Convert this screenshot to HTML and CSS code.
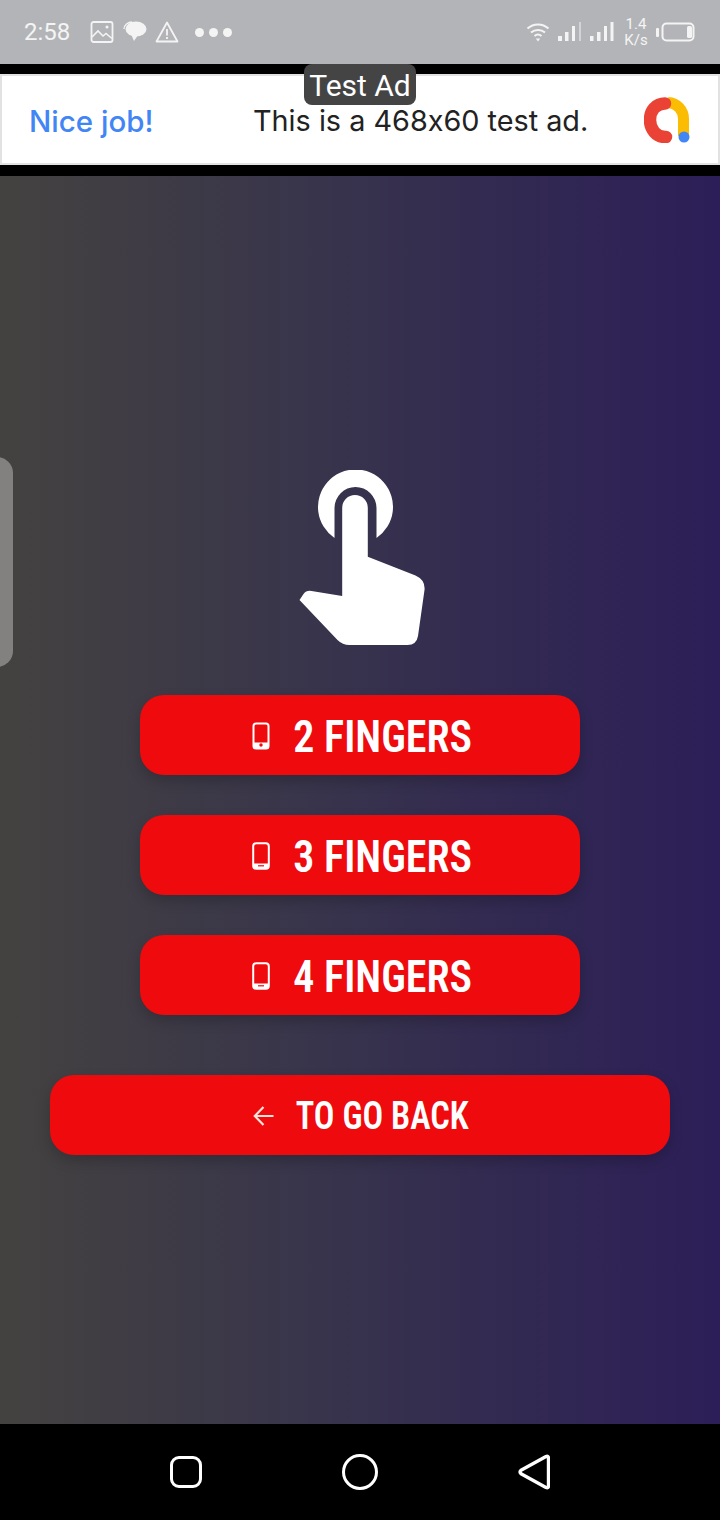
FILE: index.html
```html
<!DOCTYPE html>
<html lang="en">
<head>
<meta charset="UTF-8">
<title>Fingers</title>
<link rel="stylesheet" href="styles.css">
</head>
<body>
<div class="phone">
  <div class="statusBar">
    <span class="time">2:58</span>
    <svg class="statIcon imgIcon" width="24" height="24" viewBox="0 0 24 24"><rect x="1.500" y="2" width="21" height="20" rx="2" fill="none" stroke="#f4f4f4" stroke-width="1.800"/><path d="M2 17l6-6 5 5 3-2.500 6 5" fill="none" stroke="#f4f4f4" stroke-width="1.600"/><circle cx="17" cy="7" r="1.500" fill="#f4f4f4"/></svg>
    <svg class="statIcon chatIcon" width="24" height="24" viewBox="0 0 24 24"><ellipse cx="13" cy="9" rx="10.500" ry="7.500" fill="#f4f4f4"/><path d="M1 9c0-4 4-7 8-7" fill="none" stroke="#f4f4f4" stroke-width="1.400"/><path d="M8 14l3 7 4-6z" fill="#f4f4f4"/></svg>
    <svg class="statIcon warnIcon" width="24" height="24" viewBox="0 0 24 24"><path d="M12 2.500L1.500 21.500h21z" fill="none" stroke="#f4f4f4" stroke-width="1.800" stroke-linejoin="round"/><path d="M12 9v6.500M12 17v2" stroke="#f4f4f4" stroke-width="1.800"/></svg>
    <div class="dots"><i></i><i></i><i></i></div>
    <div class="statRight">
      <svg width="24" height="22" viewBox="0 0 24 22"><path d="M1.500 7.500c6-5.500 15-5.500 21 0M5 11.500c4-3.500 10-3.500 14 0M8.500 15c2-1.700 5-1.700 7 0" fill="none" stroke="#f4f4f4" stroke-width="2"/><path d="M9.800 17.500h4.400L12 20.500z" fill="#f4f4f4"/></svg>
      <svg width="24" height="22" viewBox="0 0 24 22"><g fill="#f4f4f4"><rect x="0" y="15" width="4" height="5"/><rect x="7" y="11" width="3.500" height="9"/><rect x="14" y="5" width="3" height="15"/><rect x="21" y="1" width="2" height="19" opacity=".5"/></g></svg>
      <svg width="24" height="22" viewBox="0 0 24 22"><g fill="#f4f4f4"><rect x="0" y="15" width="3.500" height="5"/><rect x="7" y="11" width="3.500" height="9"/><rect x="14" y="5" width="3" height="15"/><rect x="20.500" y="1" width="3" height="19"/></g></svg>
      <div class="speed"><span>1.4</span><span>K/s</span></div>
      <svg width="40" height="20" viewBox="0 0 40 20"><rect x="0" y="6" width="3" height="9" rx="1" fill="#f4f4f4"/><rect x="6.500" y="1.500" width="31" height="17" rx="4" fill="none" stroke="#f4f4f4" stroke-width="2"/><rect x="31" y="4" width="5" height="12" rx="1.500" fill="#f4f4f4"/></svg>
    </div>
  </div>

  <div class="adWrap">
    <div class="adBanner">
      <span class="adNice">Nice job!</span>
      <span class="adText">This is a 468x60 test ad.</span>
      <svg class="adLogo" width="46" height="46" viewBox="0 0 46 46">
        <path d="M24 5.500C33 6 39.500 13 39.500 22V39" fill="none" stroke="#fbbc04" stroke-width="11"/>
        <path d="M21 6.500C12 6.500 6 13.500 6 23s6.500 17 15 17h1" fill="none" stroke="#ea4335" stroke-width="12.500" stroke-linecap="round"/>
        <circle cx="40" cy="40" r="5.500" fill="#4285f4"/>
      </svg>
    </div>
    <div class="adLabel">Test Ad</div>
  </div>

  <div class="mainArea">
    <div class="sideTab"></div>
    <svg class="handIcon" width="135" height="175" viewBox="293.500 470 135 175">
      <path d="M335 538A37.500 37.500 0 1 1 377 538V508A21 21 0 0 0 335 508Z" fill="#fff"/>
      <path d="M342.700 507.800A12.800 12.800 0 0 1 368.300 507.800V556.700L416 575.500Q426 580 425 590L418.500 636Q417 645 408 645H350Q343 645 338 640L300 600L304 594Q307 590 312 591L342.700 596Z" fill="#fff"/>
    </svg>
    <div class="btnGroup">
      <button class="btn">
        <svg class="btnIcon" width="18" height="28" viewBox="0 0 18 28"><rect x="1.500" y="1.500" width="15" height="25" rx="2.500" fill="none" stroke="#fff" stroke-width="2"/><rect x="1.500" y="20.500" width="15" height="6" fill="#fff"/><circle cx="9" cy="23" r="1.700" fill="#ee0a0d"/></svg>
        <span class="btnText">2 FINGERS</span>
      </button>
      <button class="btn">
        <svg class="btnIcon" width="18" height="28" viewBox="0 0 18 28"><rect x="1.200" y="1.200" width="15.600" height="25.600" rx="3" fill="none" stroke="#fff" stroke-width="2"/><rect x="1.500" y="21.500" width="15" height="5" fill="#fff"/><rect x="6" y="23.200" width="6" height="1.200" fill="#ee0a0d"/></svg>
        <span class="btnText">3 FINGERS</span>
      </button>
      <button class="btn">
        <svg class="btnIcon" width="18" height="28" viewBox="0 0 18 28"><rect x="1.200" y="1.200" width="15.600" height="25.600" rx="3" fill="none" stroke="#fff" stroke-width="2"/><rect x="1.500" y="21.500" width="15" height="5" fill="#fff"/><rect x="6" y="23.200" width="6" height="1.200" fill="#ee0a0d"/></svg>
        <span class="btnText">4 FINGERS</span>
      </button>
    </div>
    <button class="btn btnBack">
      <svg class="btnIcon" width="22" height="22" viewBox="0 0 22 22"><path d="M20.500 11H2M10.500 2L1.800 11l8.700 9" fill="none" stroke="#fde4d8" stroke-width="2.200"/></svg>
      <span class="btnText">TO GO BACK</span>
    </button>
  </div>

  <div class="navBar">
    <div class="navSquare"></div>
    <div class="navCircle"></div>
    <svg width="32" height="36" viewBox="0 0 32 36"><path d="M28 2.500Q30.500 1.500 30.500 4.500V31.500Q30.500 34.500 28 33.500L3 19.800Q1 18 3 16.200Z" fill="none" stroke="#fff" stroke-width="3.400" stroke-linejoin="round"/></svg>
  </div>
</div>
</body>
</html>
```

FILE: styles.css
```css
body { margin: 0; background-color: #000; font-family: Roboto, Arial, sans-serif; }
.phone { width: 720px; height: 1520px; display: flex; flex-direction: column; overflow: hidden; }

/* status bar */
.statusBar { height: 64px; background-color: #b3b4b7; display: flex; align-items: center; padding: 0 24px; box-sizing: border-box; color: #f4f4f4; }
.time { font-size: 24px; width: 47px; }
.imgIcon { margin-left: 19px; }
.chatIcon { margin-left: 9px; }
.warnIcon { margin-left: 8px; }
.dots { display: flex; gap: 5px; margin-left: 16px; }
.dots i { width: 9px; height: 9px; border-radius: 50%; background-color: #f4f4f4; }
.statRight { margin-left: auto; display: flex; align-items: center; gap: 8px; }
.speed { display: flex; flex-direction: column; align-items: center; font-size: 15px; line-height: 16px; width: 24px; margin: 0 0 0 2px; }

/* ad banner */
.adWrap { position: relative; background-color: #000; padding: 10px 0 11px; }
.adBanner { height: 91px; box-sizing: border-box; background-color: #fff; border: 2px solid #e2e2e2; display: flex; align-items: center; padding: 2px 27px 0; font-family: Inter, Arial, sans-serif; font-feature-settings: "calt" 0; }
.adNice { font-size: 29.500px; font-weight: 500; color: #4285f4; width: 224px; }
.adText { font-size: 28.800px; color: #222; }
.adLogo { margin-left: auto; margin-right: 1px; margin-top: -2px; }
.adLabel { position: absolute; top: 0; left: 304px; width: 112px; height: 41px; background-color: #444; color: #fff; font-size: 30px; line-height: 43px; text-align: center; border-radius: 8px; }

/* main area */
.mainArea { position: relative; flex: 1; display: flex; flex-direction: column; align-items: center; padding-top: 294px; box-sizing: border-box; background: linear-gradient(to right, #444240, #38344c 45%, #2c1e58); }
.sideTab { position: absolute; left: -20px; top: 281px; width: 33px; height: 210px; border-radius: 16px; background-color: #82817f; }
.handIcon { margin-bottom: 50px; }
.btnGroup { display: flex; flex-direction: column; gap: 40px; margin-bottom: 60px; }
.btn { width: 440px; height: 80px; border: none; border-radius: 24px; background-color: #ee0a0d; color: #fff; display: flex; align-items: center; justify-content: center; gap: 23px; padding: 2px 0 0 4px; font-family: Roboto, sans-serif; font-stretch: 75%; font-size: 45px; font-weight: 600; box-shadow: 0 6px 14px rgba(0, 0, 0, 0.2); }
.btnText { transform: scaleX(0.935); margin: 0 -6px; }
.btnBack { width: 620px; font-size: 39px; gap: 20px; padding-left: 2px; }
.btnBack .btnText { transform: scaleX(0.88); margin: 0 -11px; }

/* nav bar */
.navBar { height: 96px; background-color: #000; display: flex; align-items: center; justify-content: space-between; padding: 0 170px; box-sizing: border-box; }
.navSquare { width: 32px; height: 32px; box-sizing: border-box; border: 3.500px solid #fff; border-radius: 9px; }
.navCircle { width: 36px; height: 36px; box-sizing: border-box; border: 3.500px solid #fff; border-radius: 50%; }
```
